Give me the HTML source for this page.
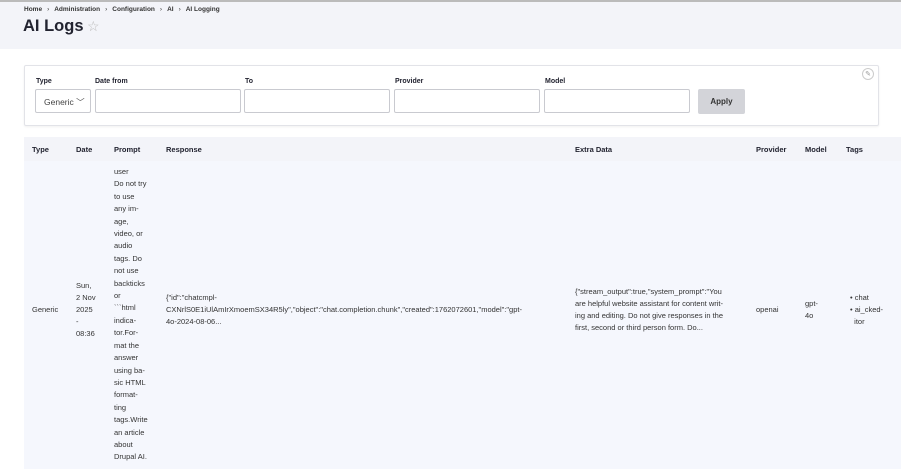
<!DOCTYPE html>
<html><head><style>
*{margin:0;padding:0;box-sizing:border-box}
body{width:901px;height:469px;overflow:hidden;background:#fff;font-family:"Liberation Sans",Arial,sans-serif;color:#222330;position:relative}
.top{position:absolute;left:0;top:0;width:901px;height:2px;background:#bbb}
.hdr{position:absolute;left:0;top:2px;width:901px;height:47px;background:#f3f4f9}
.bc{position:absolute;left:24px;top:6px;font-size:6.5px;font-weight:bold;color:#333}
.bc span{margin:0 5px;font-weight:normal}
h1{position:absolute;left:23px;top:17px;font-size:16.5px;font-weight:bold;color:#222330}
.star{position:absolute;left:87px;top:18px;font-size:14px;color:#bbb}
.filt{position:absolute;left:24px;top:65px;width:855px;height:61px;border:1px solid #e2e3e8;border-radius:2px;box-shadow:0 1px 2px rgba(0,0,0,.06)}
.lbl{position:absolute;top:78px;font-size:7px;font-weight:bold}
.inp{position:absolute;top:89px;height:24px;border:1px solid #c9cad0;border-radius:2px;background:#fff}
.sel{font-size:8.5px;color:#444;padding:6px 0 0 8px}
.apply{position:absolute;left:698px;top:89px;width:47px;height:25px;background:#d3d4d9;border-radius:2px;font-size:8px;font-weight:bold;text-align:center;line-height:25px;color:#333}
.pen{position:absolute;left:862px;top:68px;width:12px;height:12px;border:1px solid #ccc;border-radius:50%;font-size:7px;color:#999;text-align:center;line-height:11px}
.th{position:absolute;left:24px;top:137px;width:877px;height:24px;background:#f3f4f9}
.row{position:absolute;left:24px;top:161px;width:877px;height:308px;background:#f5f7fd}
.h{position:absolute;top:145px;font-size:7.5px;font-weight:bold}
.c{position:absolute;font-size:7.5px;line-height:12px;color:#333}
</style></head><body>
<div class="top"></div>
<div class="hdr"></div>
<div class="bc">Home<span>›</span>Administration<span>›</span>Configuration<span>›</span>AI<span>›</span>AI Logging</div>
<h1>AI Logs</h1><div class="star">☆</div>
<div class="filt"></div>
<div class="pen">✎</div>
<div class="lbl" style="left:36px">Type</div>
<div class="lbl" style="left:95px">Date from</div>
<div class="lbl" style="left:245px">To</div>
<div class="lbl" style="left:395px">Provider</div>
<div class="lbl" style="left:545px">Model</div>
<div class="inp sel" style="left:35px;width:56px">Generic ﹀</div>
<div class="inp" style="left:95px;width:146px"></div>
<div class="inp" style="left:244px;width:146px"></div>
<div class="inp" style="left:394px;width:146px"></div>
<div class="inp" style="left:544px;width:146px"></div>
<div class="apply">Apply</div>
<div class="th"></div><div class="row"></div>
<div class="h" style="left:32px">Type</div>
<div class="h" style="left:76px">Date</div>
<div class="h" style="left:114px">Prompt</div>
<div class="h" style="left:166px">Response</div>
<div class="h" style="left:575px">Extra Data</div>
<div class="h" style="left:756px">Provider</div>
<div class="h" style="left:805px">Model</div>
<div class="h" style="left:846px">Tags</div>
<div class="c" style="left:32px;top:304px">Generic</div>
<div class="c" style="left:76px;top:280px">Sun,<br>2 Nov<br>2025<br>-<br>08:36</div>
<div class="c" style="left:114px;top:166px;line-height:12.4px">user<br>Do not try<br>to use<br>any im-<br>age,<br>video, or<br>audio<br>tags. Do<br>not use<br>backticks<br>or<br>&#96;&#96;&#96;html<br>indica-<br>tor.For-<br>mat the<br>answer<br>using ba-<br>sic HTML<br>format-<br>ting<br>tags.Write<br>an article<br>about<br>Drupal AI.</div>
<div class="c" style="left:166px;top:292px">{"id":"chatcmpl-<br>CXNrlS0E1iUlAmIrXmoemSX34R5ly","object":"chat.completion.chunk","created":1762072601,"model":"gpt-<br>4o-2024-08-06...</div>
<div class="c" style="left:575px;top:286px">{"stream_output":true,"system_prompt":"You<br>are helpful website assistant for content writ-<br>ing and editing. Do not give responses in the<br>first, second or third person form. Do...</div>
<div class="c" style="left:756px;top:304px">openai</div>
<div class="c" style="left:805px;top:298px">gpt-<br>4o</div>
<div class="c" style="left:850px;top:292px">• chat<br>• ai_cked-<br>&nbsp;&nbsp;itor</div>
</body></html>
